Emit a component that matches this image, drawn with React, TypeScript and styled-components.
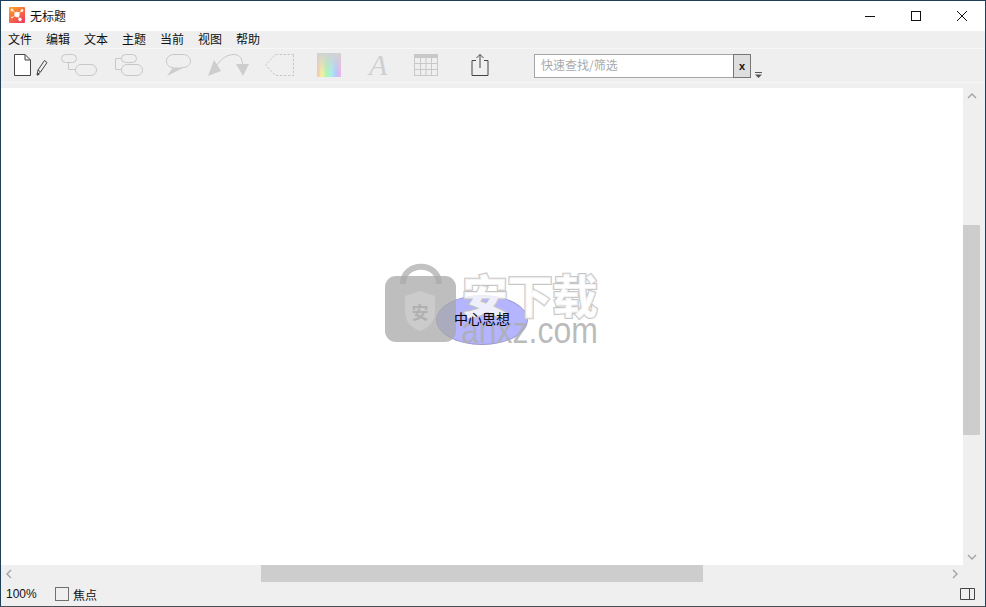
import styled, { createGlobalStyle } from 'styled-components';

const GlobalStyle = createGlobalStyle`
    html, body {
        margin: 0;
        padding: 0;
        overflow: hidden;
    }
    body {
        font-family: "Noto Sans CJK SC", "Liberation Sans", sans-serif;
        font-size: 12px;
        color: #111;
    }
`;

const menus = ['文件', '编辑', '文本', '主题', '当前', '视图', '帮助'];

const App = () => {
    return (
        <>
            <GlobalStyle />
            <Window>
                <TitleBar>
                    <AppLogo viewBox="0 0 16 16">
                        <defs>
                            <linearGradient id="logoFill" x1="0" y1="0" x2="0.7" y2="1">
                                <stop offset="0" stopColor="#fda61e" />
                                <stop offset="1" stopColor="#f0405a" />
                            </linearGradient>
                        </defs>
                        <rect width="16" height="16" rx="1" fill="url(#logoFill)" />
                        <g stroke="#fff" strokeWidth="0.7" fill="#fff">
                            <path d="M8 7.5L3 3M8 7.5L13 3.5M8 7.5L11 12.5M8 7.5L3 10.5" />
                            <circle cx="8" cy="7.5" r="2.4" />
                            <circle cx="3" cy="3" r="1" />
                            <circle cx="13" cy="3.5" r="1" />
                            <circle cx="11" cy="12.5" r="1.4" />
                            <circle cx="3" cy="10.5" r="0.5" />
                        </g>
                    </AppLogo>
                    <WindowTitle>无标题</WindowTitle>
                    <WindowControls>
                        <ControlButton>
                            <svg width="12" height="12" viewBox="0 0 12 12">
                                <path d="M1 6.5H11" stroke="#111" fill="none" />
                            </svg>
                        </ControlButton>
                        <ControlButton>
                            <svg width="12" height="12" viewBox="0 0 12 12">
                                <rect x="1.5" y="1.5" width="9" height="9" stroke="#111" fill="none" />
                            </svg>
                        </ControlButton>
                        <ControlButton>
                            <svg width="12" height="12" viewBox="0 0 12 12">
                                <path d="M1 1L11 11M11 1L1 11" stroke="#111" fill="none" />
                            </svg>
                        </ControlButton>
                    </WindowControls>
                </TitleBar>

                <MenuBar>
                    {menus.map((m) => (
                        <MenuItem key={m}>{m}</MenuItem>
                    ))}
                </MenuBar>

                <ToolBar>
                    <ToolIcon $left={12} width="35" height="24" viewBox="0 0 35 24">
                        <path d="M1.5 1.5H12L17.5 7V22.5H1.5Z M12 1.5V7H17.5" fill="#fff" stroke="#444" />
                        <path d="M24 22L25 17L31.5 7.5L34 9.5L27.5 19Z M25 17L27.5 19" fill="none" stroke="#444" />
                        <path d="M24 23L24.6 19.5L27 21Z" fill="#444" />
                    </ToolIcon>
                    <ToolIcon $left={13} width="36" height="24" viewBox="0 0 36 24">
                        <rect x="0.5" y="1.5" width="15" height="8" rx="4" fill="none" stroke="#c8c8c8" />
                        <rect x="14.5" y="11.5" width="21" height="11" rx="5.5" fill="none" stroke="#c8c8c8" />
                        <path d="M7.5 9.5V16.5H14.5" fill="none" stroke="#c8c8c8" />
                    </ToolIcon>
                    <ToolIcon $left={18} width="28" height="24" viewBox="0 0 28 24">
                        <rect x="6.5" y="1.5" width="15" height="8" rx="4" fill="none" stroke="#c8c8c8" />
                        <rect x="6.5" y="11.5" width="21" height="11" rx="5.5" fill="none" stroke="#c8c8c8" />
                        <path d="M6.5 5.5H0.5V16.5H6.5" fill="none" stroke="#c8c8c8" />
                    </ToolIcon>
                    <ToolIcon $left={23} width="25" height="24" viewBox="0 0 25 24">
                        <path d="M7 14.5C3 14.5 0.5 11.5 0.5 8C0.5 4 4 1.5 8 1.5H17C21 1.5 24.5 4 24.5 8C24.5 11.5 21.5 14.5 17 14.5H15" fill="none" stroke="#c8c8c8" />
                        <path d="M7 14.5H18L1 23Z" fill="#cdcdcd" />
                    </ToolIcon>
                    <ToolIcon $left={17} width="42" height="24" viewBox="0 0 42 24">
                        <path d="M9 12C13 6 19 1.5 26 1.5C32 1.5 34.5 6 34.5 12" fill="none" stroke="#c8c8c8" />
                        <path d="M0 23L6 7L13 18Z" fill="#cdcdcd" />
                        <path d="M28 11H41L35 23Z" fill="#cdcdcd" />
                    </ToolIcon>
                    <ToolIcon $left={15} width="29" height="24" viewBox="0 0 29 24">
                        <path d="M28.5 1.5V22.5H10.5L0.5 12L10.5 1.5Z" fill="none" stroke="#c8c8c8" strokeDasharray="2.5 1.5" />
                    </ToolIcon>
                    <GradientSwatch />
                    <FontIcon>A</FontIcon>
                    <ToolIcon $left={21} width="24" height="24" viewBox="0 0 24 24">
                        <rect x="0.5" y="1.5" width="23" height="21" fill="none" stroke="#c8c8c8" />
                        <rect x="0" y="1" width="24" height="4" fill="#c8c8c8" />
                        <path d="M6.5 5V22M12 5V22M17.5 5V22M0 10.5H24M0 16.5H24" fill="none" stroke="#c8c8c8" />
                    </ToolIcon>
                    <ToolIcon $left={33} width="18" height="24" viewBox="0 0 18 24">
                        <path d="M5 7.5H1V22.5H17V7.5H13" fill="none" stroke="#444" />
                        <path d="M9 15V1.5M5.5 5L9 1.5L12.5 5" fill="none" stroke="#444" />
                    </ToolIcon>

                    <SearchBox>
                        <SearchPlaceholder>快速查找/筛选</SearchPlaceholder>
                        <ClearButton>x</ClearButton>
                    </SearchBox>
                    <OverflowIcon viewBox="0 0 7 6">
                        <path d="M0 0.5H7" stroke="#555" fill="none" />
                        <path d="M0 2.5H7L3.5 6Z" fill="#555" />
                    </OverflowIcon>
                </ToolBar>

                <Workspace>
                    <CanvasColumn>
                        <Canvas>
                            <CentralTopic />
                            <Watermark>
                                <svg width="72" height="82" viewBox="0 0 72 82">
                                    <path d="M18 22C18 -1 54 -1 54 22" fill="none" stroke="#c2c2c2" strokeWidth="6" />
                                    <rect x="0" y="14" width="71" height="66" rx="11" fill="#a8a8a8" fillOpacity="0.75" />
                                    <path d="M20 34L35 29L50 34V50C50 60 43 66 35 69C27 66 20 60 20 50Z" fill="#cbcbcb" />
                                    <text x="35" y="57" textAnchor="middle" fontSize="17" fontWeight="700" fill="#b0b0b0" fontFamily="Noto Sans CJK SC">安</text>
                                </svg>
                                <WatermarkText>
                                    <WatermarkTitle>安下载</WatermarkTitle>
                                    <WatermarkDomain>anxz.com</WatermarkDomain>
                                </WatermarkText>
                            </Watermark>
                            <TopicLabel>中心思想</TopicLabel>
                        </Canvas>
                        <HorizontalScroll>
                            <ScrollArrow viewBox="0 0 8 10">
                                <path d="M6 1L2 5L6 9" />
                            </ScrollArrow>
                            <ScrollTrack>
                                <HorizontalThumb />
                            </ScrollTrack>
                            <ScrollArrow viewBox="0 0 8 10">
                                <path d="M2 1L6 5L2 9" />
                            </ScrollArrow>
                        </HorizontalScroll>
                    </CanvasColumn>
                    <VerticalScroll>
                        <ScrollArrow viewBox="0 0 10 8">
                            <path d="M1 6L5 2L9 6" />
                        </ScrollArrow>
                        <VerticalTrack>
                            <VerticalThumb />
                        </VerticalTrack>
                        <ScrollArrow viewBox="0 0 10 8">
                            <path d="M1 2L5 6L9 2" />
                        </ScrollArrow>
                    </VerticalScroll>
                </Workspace>

                <StatusBar>
                    <ZoomLevel>100%</ZoomLevel>
                    <FocusCheck />
                    <FocusLabel>焦点</FocusLabel>
                    <SplitIcon viewBox="0 0 15 12">
                        <path d="M0.5 0.5H14.5V11.5H0.5Z M9.5 0.5V11.5" fill="none" stroke="#444" />
                    </SplitIcon>
                </StatusBar>
            </Window>
        </>
    );
};

const Window = styled.div`
    width: 986px;
    height: 607px;
    box-sizing: border-box;
    border: 1px solid #1d3f5a;
    border-bottom-color: #4a4f54;
    display: flex;
    flex-direction: column;
    background-color: #efefef;
    overflow: hidden;
`;

const TitleBar = styled.div`
    height: 30px;
    flex: none;
    background-color: #fff;
    display: flex;
    align-items: center;
    padding-left: 8px;
`;

const AppLogo = styled.svg`
    width: 16px;
    height: 16px;
    margin-bottom: 2px;
`;

const WindowTitle = styled.div`
    margin-left: 5px;
    font-size: 12px;
    line-height: 16px;
`;

const WindowControls = styled.div`
    margin-left: auto;
    display: flex;
`;

const ControlButton = styled.div`
    width: 46px;
    height: 30px;
    display: flex;
    align-items: center;
    justify-content: center;
`;

const MenuBar = styled.div`
    height: 17px;
    flex: none;
    display: flex;
    gap: 14px;
    padding-left: 7px;
    align-items: flex-start;
`;

const MenuItem = styled.div`
    width: 24px;
    font-size: 12px;
    line-height: 16px;
    white-space: nowrap;
`;

const ToolBar = styled.div`
    height: 35px;
    flex: none;
    box-sizing: border-box;
    border-top: 1px solid #f6f6f6;
    border-bottom: 1px solid #f6f6f6;
    margin-bottom: 5px;
    display: flex;
    align-items: flex-start;
    padding-top: 4px;
`;

const ToolIcon = styled.svg<{ $left: number }>`
    flex: none;
    margin-left: ${(p) => p.$left}px;
`;

const FontIcon = styled.div`
    flex: none;
    width: 24px;
    height: 24px;
    margin-left: 28px;
    font-family: "Liberation Serif", serif;
    font-style: italic;
    font-size: 30px;
    line-height: 24px;
    color: #cfcfcf;
`;

const GradientSwatch = styled.div`
    flex: none;
    width: 24px;
    height: 24px;
    margin-left: 23px;
    background:
        linear-gradient(to bottom, #d2d2d2 0%, rgba(210, 210, 210, 0) 85%),
        linear-gradient(to right, #f8c0b0, #f6f0a0, #b0f4b0, #a8ecf0, #b8c8f8, #f4b0ec);
`;

const SearchBox = styled.div`
    margin-left: 45px;
    margin-top: 1px;
    width: 217px;
    height: 24px;
    flex: none;
    display: flex;
    box-sizing: border-box;
`;

const SearchPlaceholder = styled.div`
    flex: 1;
    box-sizing: border-box;
    background-color: #fff;
    border: 1px solid #a6a6a6;
    border-right: none;
    padding-left: 6px;
    color: #a9a9a9;
    font-size: 12px;
    line-height: 20px;
`;

const ClearButton = styled.div`
    width: 18px;
    box-sizing: border-box;
    background-color: #dedede;
    border: 1px solid #777;
    text-align: center;
    font-family: "Liberation Sans", sans-serif;
    font-weight: 700;
    font-size: 11px;
    line-height: 22px;
`;

const OverflowIcon = styled.svg`
    flex: none;
    width: 7px;
    height: 6px;
    margin-left: 4px;
    margin-top: 19px;
`;

const Workspace = styled.div`
    flex: 1;
    min-height: 0;
    display: flex;
`;

const CanvasColumn = styled.div`
    width: 962px;
    flex: none;
    display: flex;
    flex-direction: column;
`;

const Canvas = styled.div`
    flex: 1;
    position: relative;
    background-color: #fff;
    overflow: hidden;
`;

const CentralTopic = styled.div`
    position: absolute;
    left: 435px;
    top: 207px;
    width: 92px;
    height: 50px;
    box-sizing: border-box;
    border-radius: 50%;
    background-color: #b4b4ff;
    border: 1px solid #9a9ad0;
`;

const TopicLabel = styled.div`
    position: absolute;
    left: 435px;
    top: 207px;
    width: 92px;
    height: 46px;
    display: flex;
    align-items: center;
    justify-content: center;
    color: #000;
    font-size: 14px;
`;

const Watermark = styled.div`
    position: absolute;
    left: 384px;
    top: 174px;
    display: flex;
    align-items: flex-start;
    pointer-events: none;
`;

const WatermarkText = styled.div`
    margin-left: 5px;
    margin-top: 6px;
    display: flex;
    flex-direction: column;
    align-items: flex-start;
`;

const WatermarkTitle = styled.div`
    font-size: 46px;
    line-height: 50px;
    font-weight: 900;
    letter-spacing: -1px;
    white-space: nowrap;
    color: rgba(255, 255, 255, 0.8);
    -webkit-text-stroke: 2px #c6c6c6;
    paint-order: stroke fill;
`;

const WatermarkDomain = styled.div`
    font-family: "Liberation Sans", sans-serif;
    font-size: 32px;
    line-height: 30px;
    margin-top: -3px;
    margin-left: -1px;
    transform: scaleY(1.15);
    color: rgba(175, 175, 175, 0.85);
`;

const HorizontalScroll = styled.div`
    height: 17px;
    flex: none;
    display: flex;
    align-items: center;
    justify-content: space-between;
`;

const ScrollArrow = styled.svg`
    flex: none;
    width: 10px;
    height: 10px;
    margin: 3px;
    fill: none;
    stroke: #a3a3a3;
    stroke-width: 1.4;
`;

const ScrollTrack = styled.div`
    flex: 1;
    height: 100%;
    display: flex;
    padding-left: 244px;
`;

const HorizontalThumb = styled.div`
    width: 442px;
    height: 100%;
    background-color: #cdcdcd;
`;

const VerticalScroll = styled.div`
    width: 17px;
    flex: none;
    height: 477px;
    display: flex;
    flex-direction: column;
    align-items: center;
    justify-content: space-between;
`;

const VerticalTrack = styled.div`
    flex: 1;
    width: 100%;
    padding-top: 121px;
    box-sizing: border-box;
`;

const VerticalThumb = styled.div`
    width: 100%;
    height: 210px;
    background-color: #cdcdcd;
`;

const StatusBar = styled.div`
    height: 24px;
    flex: none;
    display: flex;
    align-items: center;
    padding-left: 5px;
    padding-right: 10px;
    margin-top: auto;
`;

const ZoomLevel = styled.div`
    width: 49px;
    font-family: "Liberation Sans", sans-serif;
    font-size: 12px;
`;

const FocusCheck = styled.div`
    width: 14px;
    height: 14px;
    box-sizing: border-box;
    border: 1px solid #707070;
`;

const FocusLabel = styled.div`
    margin-left: 4px;
    font-size: 12px;
`;

const SplitIcon = styled.svg`
    width: 15px;
    height: 12px;
    margin-left: auto;
`;

export default App;
